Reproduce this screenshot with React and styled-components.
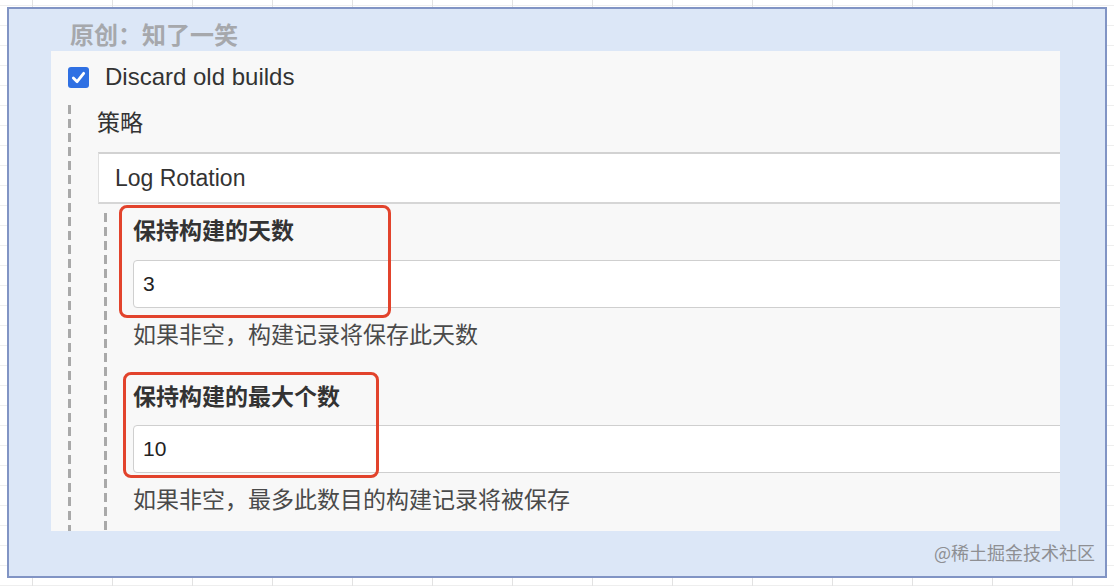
import React from 'react';
import styled, { createGlobalStyle } from 'styled-components';

const GlobalStyle = createGlobalStyle`
  html, body {
    margin: 0;
    padding: 0;
  }
  body {
    width: 1114px;
    height: 586px;
    overflow: hidden;
    font-family: "Liberation Sans", "Noto Sans CJK SC", sans-serif;
    background-color: #fff;
    background-image:
      linear-gradient(to right, #e2e2e2 1px, transparent 1px),
      linear-gradient(to bottom, #eeeeee 1px, transparent 1px);
    background-size: 80px 100%, 100% 20px;
    background-position: 32px 0, 0 5px;
  }
  * { box-sizing: border-box; }
`;

const Frame = styled.div`
  margin: 7px 0 0 7px;
  width: 1100px;
  height: 571px;
  border: 2px solid #8194c4;
  background: #dce7f7;
  display: flex;
  flex-direction: column;
`;

const Mark = styled.div`
  height: 42px;
  padding: 13px 0 0 61px;
  font-family: "Noto Sans CJK SC", sans-serif;
  font-size: 24px;
  line-height: 24px;
  font-weight: 700;
  color: #a6a8ac;
`;

const Panel = styled.div`
  margin-left: 42px;
  width: 1009px;
  height: 480px;
  background: #f8f8f8;
  overflow: hidden;
  display: flex;
  flex-direction: column;
`;

const CheckRow = styled.label`
  display: flex;
  align-items: center;
  gap: 16px;
  padding: 14px 0 0 17px;
  font-size: 24px;
  line-height: 24px;
  color: #333;
`;

const Box = styled.span`
  width: 21px;
  height: 21px;
  border-radius: 3px;
  background: #2f70e3;
  display: flex;
  align-items: center;
  justify-content: center;
`;

const Section = styled.div`
  flex: 1;
  display: flex;
  flex-direction: column;
  margin: ${(p) => p.$top}px 0 0 ${(p) => p.$left}px;
  padding: ${(p) => p.$pad}px 0 0 29px;
  background: repeating-linear-gradient(to bottom, #a9a9a9 0 9px, transparent 9px 14px)
    no-repeat left top / 3px 100%;
`;

const Label = styled.div`
  font-family: "Noto Sans CJK SC", sans-serif;
  font-size: 23px;
  line-height: 30px;
  font-weight: ${(p) => (p.$bold ? 700 : 400)};
  color: #333;
`;

const Select = styled.div`
  margin: 16px -20px 0 1px;
  height: 52px;
  background: #fff;
  border-top: 2px solid #d2d2d2;
  border-bottom: 2px solid #d6d6d6;
  border-left: 1px solid #e0e0e0;
  padding-left: 16px;
  display: flex;
  align-items: center;
  font-size: 23px;
  color: #333;
`;

const Field = styled.div`
  position: relative;
  margin-top: ${(p) => p.$top}px;
  display: flex;
  flex-direction: column;
`;

const Input = styled.div`
  margin: ${(p) => p.$gap}px -20px 0 0;
  height: 48px;
  background: #fff;
  border: 1px solid #cfcfcf;
  border-radius: 4px;
  padding-left: 9px;
  display: flex;
  align-items: center;
  font-size: 21px;
  color: #222;
`;

const Help = styled.div`
  margin-top: 9px;
  font-family: "Noto Sans CJK SC", sans-serif;
  font-size: 23px;
  line-height: 32px;
  color: #4a4a4a;
`;

const Callout = styled.div`
  position: absolute;
  left: ${(p) => p.$x}px;
  top: ${(p) => p.$y}px;
  width: ${(p) => p.$w}px;
  height: ${(p) => p.$h}px;
  border: 3px solid #e2432c;
  border-radius: 8px;
  pointer-events: none;
`;

const Footer = styled.div`
  flex: 1;
  display: flex;
  justify-content: flex-end;
  align-items: center;
  padding: 0 10px 4px 0;
  font-family: "Noto Sans CJK SC", sans-serif;
  font-size: 18px;
  color: #8e8f93;
`;

const Check = () => (
  <svg width="15" height="15" viewBox="0 0 16 16">
    <path d="M2.5 8.5 L6.5 12.5 L13.5 3.5" fill="none" stroke="#fff" strokeWidth="3" strokeLinecap="round" strokeLinejoin="round" />
  </svg>
);

const fields = [
  { label: '保持构建的天数', value: '3', help: '如果非空，构建记录将保存此天数', top: 0, gap: 16, box: { x: -14, y: -9, w: 272, h: 113 } },
  { label: '保持构建的最大个数', value: '10', help: '如果非空，最多此数目的构建记录将被保存', top: 31, gap: 15, box: { x: -10, y: -8, w: 256, h: 106 } },
];

export default function App() {
  return (
    <>
      <GlobalStyle />
      <Frame>
        <Mark>原创：知了一笑</Mark>
        <Panel>
          <CheckRow>
            <Box><Check /></Box>
            Discard old builds
          </CheckRow>
          <Section $top={16} $left={17} $pad={1}>
            <Label>策略</Label>
            <Select>Log Rotation</Select>
            <Section $top={9} $left={7} $pad={1}>
              {fields.map((f) => (
                <Field key={f.label} $top={f.top}>
                  <Label $bold>{f.label}</Label>
                  <Input $gap={f.gap}>{f.value}</Input>
                  <Help>{f.help}</Help>
                  <Callout $x={f.box.x} $y={f.box.y} $w={f.box.w} $h={f.box.h} />
                </Field>
              ))}
            </Section>
          </Section>
        </Panel>
        <Footer>@稀土掘金技术社区</Footer>
      </Frame>
    </>
  );
}
